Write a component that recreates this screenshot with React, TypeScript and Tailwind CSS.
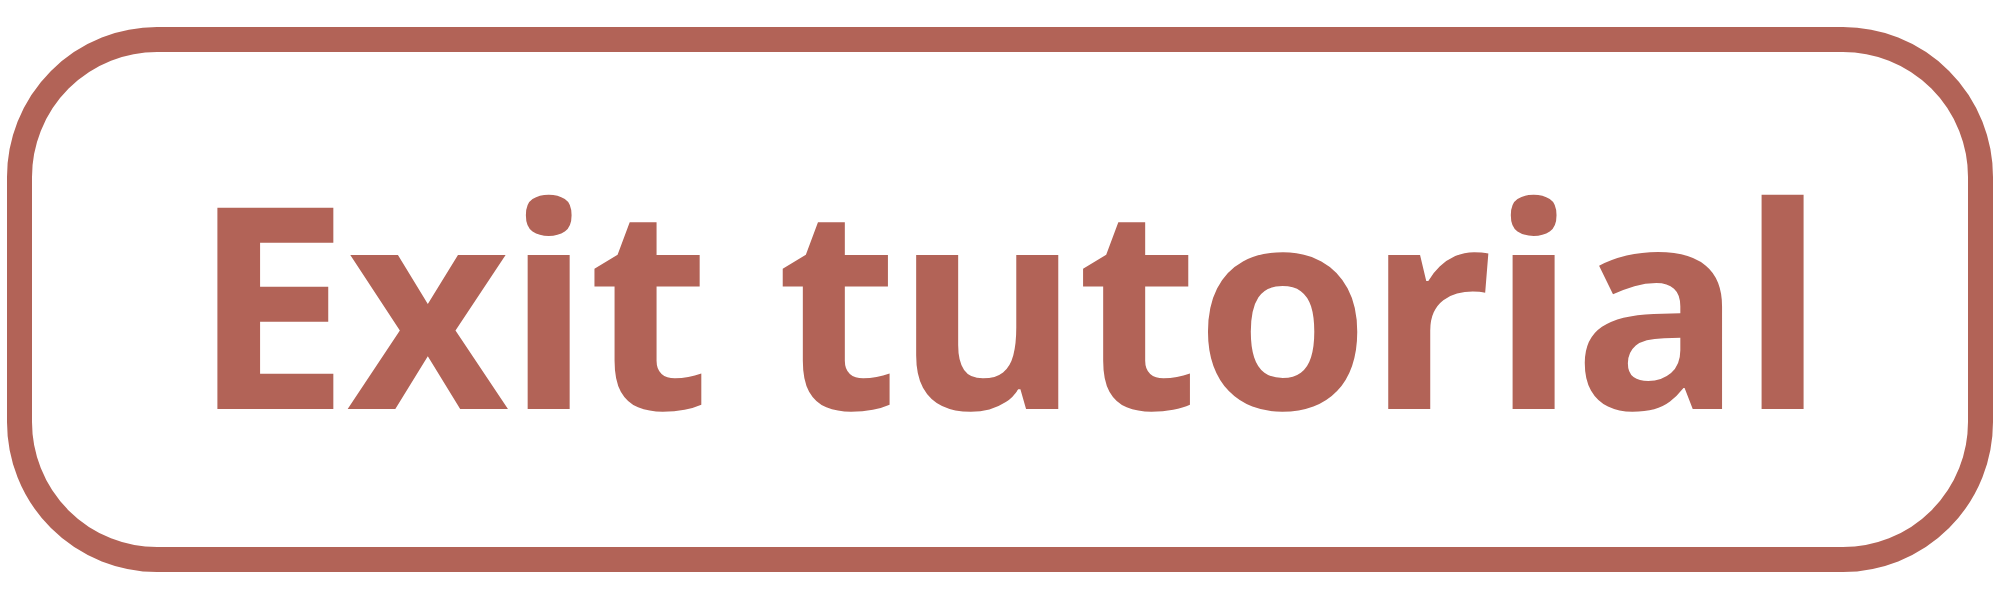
export default function App() {
  return (
    <div className="w-[2000px] h-[600px] bg-white pl-[7px] pt-[27px]">
      <button
        type="button"
        className="w-[1986px] h-[545px] rounded-[150px] border-[25px] border-[#b26357] bg-white flex items-center justify-center"
      >
        <span className="pl-[14px] font-['Open_Sans',sans-serif] font-bold text-[282px] leading-none tracking-[-3.7px] text-[#b26357]">
          Exit tutorial
        </span>
      </button>
    </div>
  );
}
